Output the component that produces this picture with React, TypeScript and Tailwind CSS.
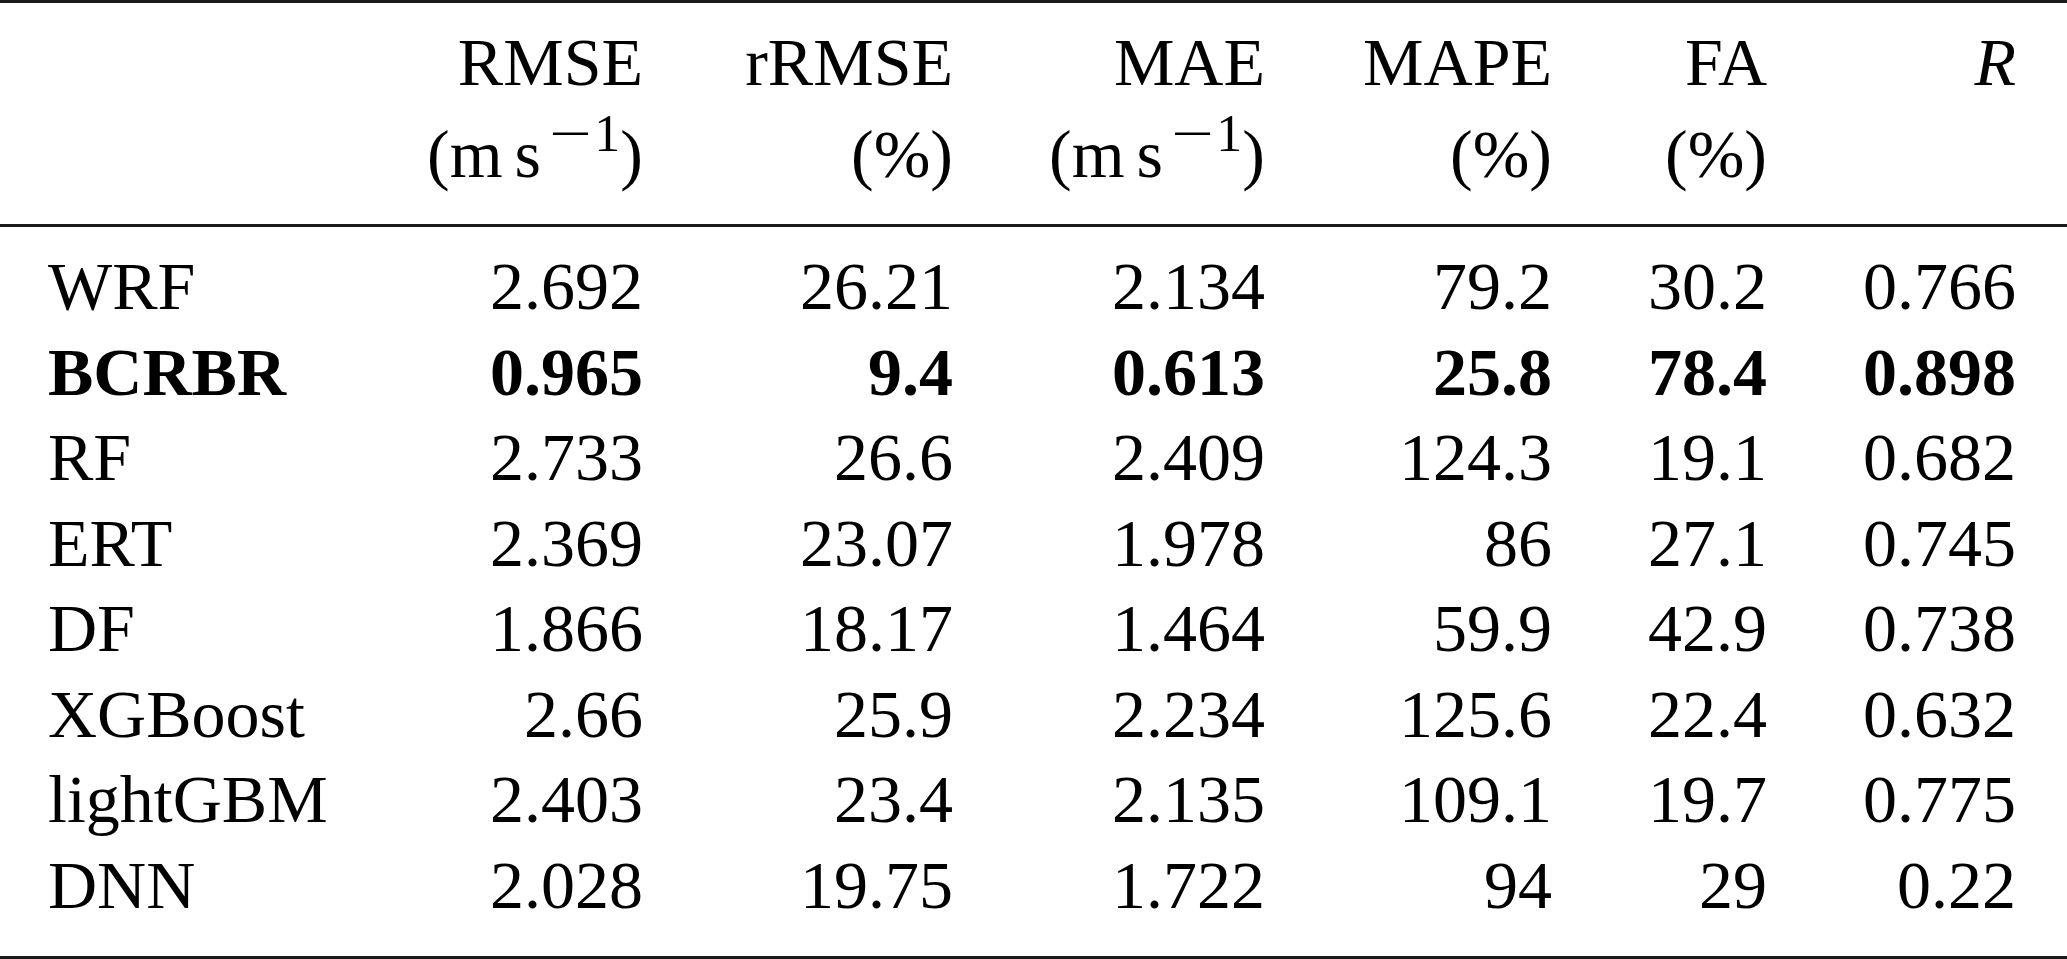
import React from "react";

type Row = { name: string; vals: string[]; best?: boolean };

const rows: Row[] = [
  { name: "WRF", vals: ["2.692", "26.21", "2.134", "79.2", "30.2", "0.766"] },
  { name: "BCRBR", vals: ["0.965", "9.4", "0.613", "25.8", "78.4", "0.898"], best: true },
  { name: "RF", vals: ["2.733", "26.6", "2.409", "124.3", "19.1", "0.682"] },
  { name: "ERT", vals: ["2.369", "23.07", "1.978", "86", "27.1", "0.745"] },
  { name: "DF", vals: ["1.866", "18.17", "1.464", "59.9", "42.9", "0.738"] },
  { name: "XGBoost", vals: ["2.66", "25.9", "2.234", "125.6", "22.4", "0.632"] },
  { name: "lightGBM", vals: ["2.403", "23.4", "2.135", "109.1", "19.7", "0.775"] },
  { name: "DNN", vals: ["2.028", "19.75", "1.722", "94", "29", "0.22"] },
];

const cols = "grid grid-cols-[352px_243px_310px_312px_287px_215px_249px] pl-[48px] pr-[51px]";

const Rule = () => <div className="h-[3px] bg-[#1a1a1a]" />;

// (m s^-1) unit label
const Speed = () => (
  <span className="whitespace-nowrap">
    (m<span className="ml-[12px]">s</span>
    <span className="relative -top-[26px] ml-[8px] inline-block text-[52px] leading-none">
      <span className="mr-[16px] inline-block origin-left scale-x-[1.45]">−</span>1
    </span>
    )
  </span>
);

const headers: { top: React.ReactNode; unit?: React.ReactNode }[] = [
  { top: "RMSE", unit: <Speed /> },
  { top: "rRMSE", unit: "(%)" },
  { top: "MAE", unit: <Speed /> },
  { top: "MAPE", unit: "(%)" },
  { top: "FA", unit: "(%)" },
  { top: <i>R</i> },
];

export default function App() {
  return (
    <div className="w-[2067px] h-[959px] overflow-hidden bg-white text-black font-['Liberation_Serif','Times_New_Roman',serif] text-[68px]">
      <Rule />
      <div className={`${cols} pt-[13px] pb-[24px] leading-[92px]`}>
        <div />
        {headers.map((h, i) => (
          <div key={i} className="text-right">
            <div>{h.top}</div>
            <div>{h.unit ?? "\u00a0"}</div>
          </div>
        ))}
      </div>
      <Rule />
      <div className="pt-[17px] pb-[28px] leading-[85.5px]">
        {rows.map((r) => (
          <div key={r.name} className={`${cols} ${r.best ? "font-bold" : ""}`}>
            <div>{r.name}</div>
            {r.vals.map((v, i) => (
              <div key={i} className="text-right">
                {v}
              </div>
            ))}
          </div>
        ))}
      </div>
      <Rule />
    </div>
  );
}
